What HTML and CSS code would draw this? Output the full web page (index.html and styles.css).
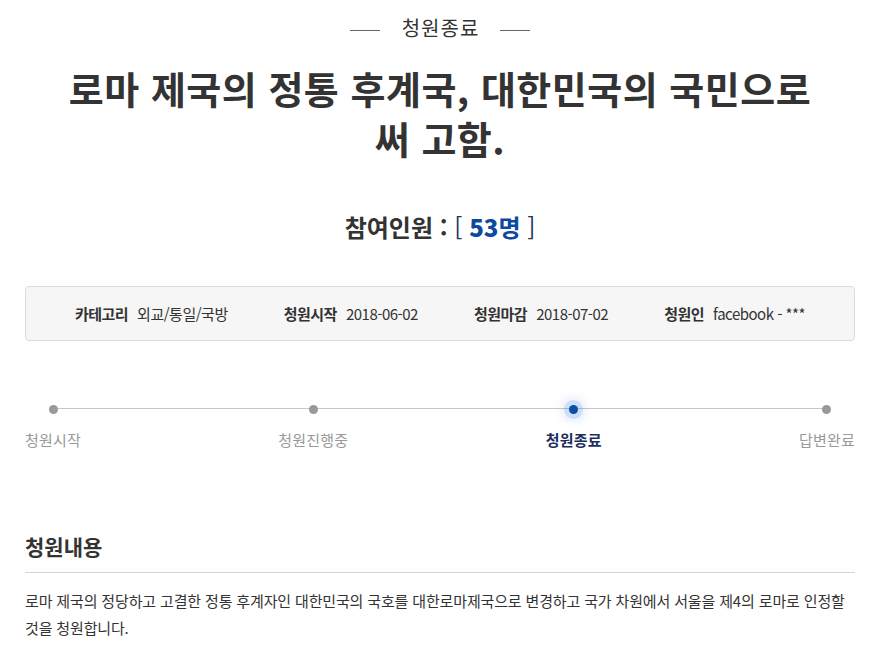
FILE: index.html
```html
<!DOCTYPE html>
<html lang="ko">
<head>
    <meta charset="UTF-8">
    <meta name="viewport" content="width=device-width, initial-scale=1.0">
    <title>청원종료</title>
    <link rel="stylesheet" href="styles.css">
</head>
<body>
    <div class="petition">
        <div class="status-tag"><span>청원종료</span></div>
        <h1 class="petition-title">로마 제국의 정통 후계국, 대한민국의 국민으로써 고함.</h1>
        <div class="count">참여인원 : <span class="count-num"><span class="bracket">[</span> <b>53</b>명 <span class="bracket">]</span></span></div>

        <ul class="info-box">
            <li><strong>카테고리</strong>외교/통일/국방</li>
            <li><strong>청원시작</strong>2018-06-02</li>
            <li><strong>청원마감</strong>2018-07-02</li>
            <li><strong>청원인</strong>facebook - ***</li>
        </ul>

        <ol class="progress">
            <li><span class="dot"></span><span class="step">청원시작</span></li>
            <li><span class="dot"></span><span class="step">청원진행중</span></li>
            <li class="active"><span class="dot"></span><span class="step">청원종료</span></li>
            <li><span class="dot"></span><span class="step">답변완료</span></li>
        </ol>

        <h2 class="section-title">청원내용</h2>
        <p class="content">로마 제국의 정당하고 고결한 정통 후계자인 대한민국의 국호를 대한로마제국으로 변경하고 국가 차원에서 서울을 제4의 로마로 인정할 것을 청원합니다.</p>
    </div>
</body>
</html>
```

FILE: styles.css
```css
body {
    margin: 0;
    font-family: "Noto Sans CJK KR", "Noto Sans", sans-serif;
    color: #333;
    background-color: #fff;
}
.petition {
    padding: 0 25px;
}
.status-tag {
    margin-top: 15px;
    text-align: center;
    font-size: 20px;
    line-height: 26px;
    letter-spacing: 1px;
    color: #333;
}
.status-tag span::before,
.status-tag span::after {
    content: "";
    display: inline-block;
    width: 30px;
    height: 1px;
    background-color: #666;
    vertical-align: middle;
}
.status-tag span::before {
    margin-right: 22px;
}
.status-tag span::after {
    margin-left: 21px;
}
.petition-title {
    margin: 22px 0 0;
    padding: 0 35px;
    text-align: center;
    font-size: 38px;
    line-height: 50px;
    font-weight: 700;
    letter-spacing: 0.5px;
    color: #333;
}
.count {
    margin-top: 47px;
    text-align: center;
    font-size: 24px;
    line-height: 34px;
    font-weight: 700;
    color: #333;
}
.count-num {
    color: #0b4a9e;
}
.bracket {
    font-weight: 400;
    color: #1f3660;
}
.info-box {
    display: flex;
    justify-content: center;
    align-items: center;
    gap: 56px;
    margin: 42px 0 0;
    padding: 0;
    height: 53px;
    list-style: none;
    background-color: #f6f6f6;
    border: 1px solid #dcdcdc;
    border-radius: 4px;
    font-size: 15px;
    letter-spacing: -0.5px;
    color: #333;
}
.info-box strong {
    margin-right: 9px;
    font-weight: 700;
}
.progress {
    position: relative;
    display: flex;
    justify-content: space-between;
    margin: 56px 0 0;
    padding: 0;
    list-style: none;
}
.progress::before {
    content: "";
    position: absolute;
    top: 11px;
    left: 27px;
    right: 28px;
    height: 1px;
    background-color: #c8c8c8;
}
.progress li {
    position: relative;
    display: flex;
    flex-direction: column;
    align-items: center;
}
.dot {
    display: flex;
    align-items: center;
    justify-content: center;
    height: 24px;
}
.dot::before {
    content: "";
    width: 9px;
    height: 9px;
    border-radius: 50%;
    background-color: #999;
}
.active .dot::before {
    background-color: #0b4ea2;
    box-shadow: 0 0 0 5px rgba(40, 120, 220, 0.16), 0 0 6px 9px rgba(40, 120, 220, 0.08);
}
.step {
    margin-top: 9px;
    font-size: 15px;
    line-height: 20px;
    letter-spacing: 0.2px;
    color: #999;
}
.active .step {
    font-weight: 700;
    color: #1b2f5e;
}
.section-title {
    margin: 82px 0 0;
    padding-bottom: 12px;
    border-bottom: 1px solid #d4d4d4;
    font-size: 21px;
    line-height: 28px;
    font-weight: 700;
    color: #333;
}
.content {
    margin: 14px 0 0;
    padding-right: 8px;
    font-size: 15px;
    line-height: 27px;
    letter-spacing: -0.15px;
    color: #333;
}
```
